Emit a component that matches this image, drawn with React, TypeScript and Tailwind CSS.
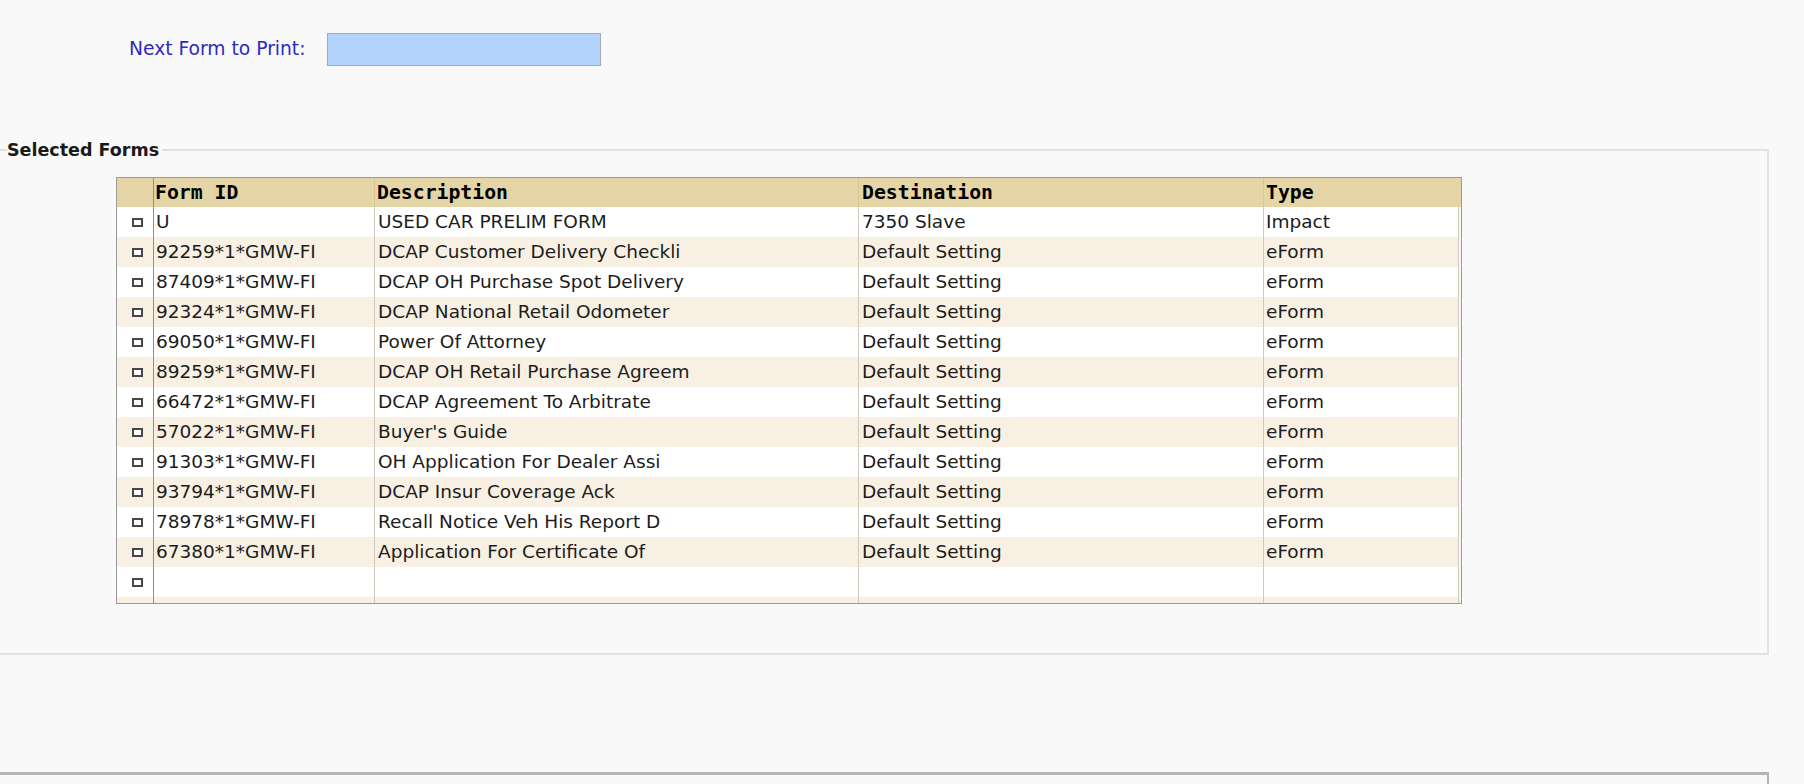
const rows = [
  { id: "U", desc: "USED CAR PRELIM FORM", dest: "7350 Slave", type: "Impact" },
  { id: "92259*1*GMW-FI", desc: "DCAP Customer Delivery Checkli", dest: "Default Setting", type: "eForm" },
  { id: "87409*1*GMW-FI", desc: "DCAP OH Purchase Spot Delivery", dest: "Default Setting", type: "eForm" },
  { id: "92324*1*GMW-FI", desc: "DCAP National Retail Odometer", dest: "Default Setting", type: "eForm" },
  { id: "69050*1*GMW-FI", desc: "Power Of Attorney", dest: "Default Setting", type: "eForm" },
  { id: "89259*1*GMW-FI", desc: "DCAP OH Retail Purchase Agreem", dest: "Default Setting", type: "eForm" },
  { id: "66472*1*GMW-FI", desc: "DCAP Agreement To Arbitrate", dest: "Default Setting", type: "eForm" },
  { id: "57022*1*GMW-FI", desc: "Buyer's Guide", dest: "Default Setting", type: "eForm" },
  { id: "91303*1*GMW-FI", desc: "OH Application For Dealer Assi", dest: "Default Setting", type: "eForm" },
  { id: "93794*1*GMW-FI", desc: "DCAP Insur Coverage Ack", dest: "Default Setting", type: "eForm" },
  { id: "78978*1*GMW-FI", desc: "Recall Notice Veh His Report D", dest: "Default Setting", type: "eForm" },
  { id: "67380*1*GMW-FI", desc: "Application For Certificate Of", dest: "Default Setting", type: "eForm" },
  { id: "", desc: "", dest: "", type: "" },
  { id: "", desc: "", dest: "", type: "", partial: true },
];

const cols = "grid grid-cols-[36px_221px_484px_405px_1fr]";

const Checkbox = () => (
  <div className="w-[11px] h-[9px] border-2 border-[#474747] bg-white" />
);

const FormsTable = () => {
  return (
    <div className="ml-[116px] w-[1346px] border border-[#9a9a9a]">
      {/* header */}
      <div className={`${cols} h-[29px] bg-[#e5d5a6] font-['DejaVu_Sans_Mono',monospace] font-bold text-[19.8px] leading-[29px] text-black`}>
        <div />
        <div className="border-l border-[#8f8f8f] pl-[1px]">Form ID</div>
        <div className="border-l border-[#d6c796] pl-[2px]">Description</div>
        <div className="border-l border-[#d6c796] pl-[3px]">Destination</div>
        <div className="border-l border-[#d6c796] pl-[2px]">Type</div>
      </div>

      {/* body */}
      <div className="h-[396px] overflow-hidden pr-[2px]">
        <div className="border-r border-[#cfcabd]">
          {rows.map((r, i) => (
            <div
              key={i}
              className={`${cols} h-[30px] leading-[30px] text-[18.5px] text-[#1c1c1c] ${
                i % 2 === 1 ? "bg-[#f7f0e3]" : "bg-white"
              }`}
            >
              <div className="flex items-center justify-end pr-[10px]">
                {!r.partial && <Checkbox />}
              </div>
              <div className="border-l border-[#8f8f8f] pl-[2px] whitespace-nowrap overflow-hidden">{r.id}</div>
              <div className="border-l border-[#cfcabd] pl-[3px] whitespace-nowrap overflow-hidden">{r.desc}</div>
              <div className="border-l border-[#cfcabd] pl-[3px] whitespace-nowrap overflow-hidden">{r.dest}</div>
              <div className="border-l border-[#cfcabd] pl-[2px] whitespace-nowrap overflow-hidden">{r.type}</div>
            </div>
          ))}
        </div>
      </div>
    </div>
  );
};

export default function App() {
  return (
    <div className="h-[784px] w-full overflow-hidden bg-[#f9f9f9] font-['DejaVu_Sans',sans-serif]">
      <div className="h-[139px] pt-[33px] pl-[129px]">
        <div className="flex items-center h-[33px]">
          <span className="w-[198px] text-[18.7px] text-[#2b2bc4] whitespace-nowrap">
            Next Form to Print:
          </span>
          <div className="w-[274px] h-[33px] bg-[#b3d3fd] border border-[#a3abb5]" />
        </div>
      </div>

      <fieldset className="w-[1769px] border-t-2 border-r-2 border-b-2 border-[#e1e1e1] pt-[16px] pb-[49px]">
        <legend className="ml-[7px] pr-[3px] text-[17.5px] leading-[22px] font-bold text-[#1a1a1a]">
          Selected Forms
        </legend>
        <FormsTable />
      </fieldset>

      <div className="mt-[117px] w-[1769px] h-[40px] border-t-[3px] border-r-2 border-[#b4b4b4]" />
    </div>
  );
}
